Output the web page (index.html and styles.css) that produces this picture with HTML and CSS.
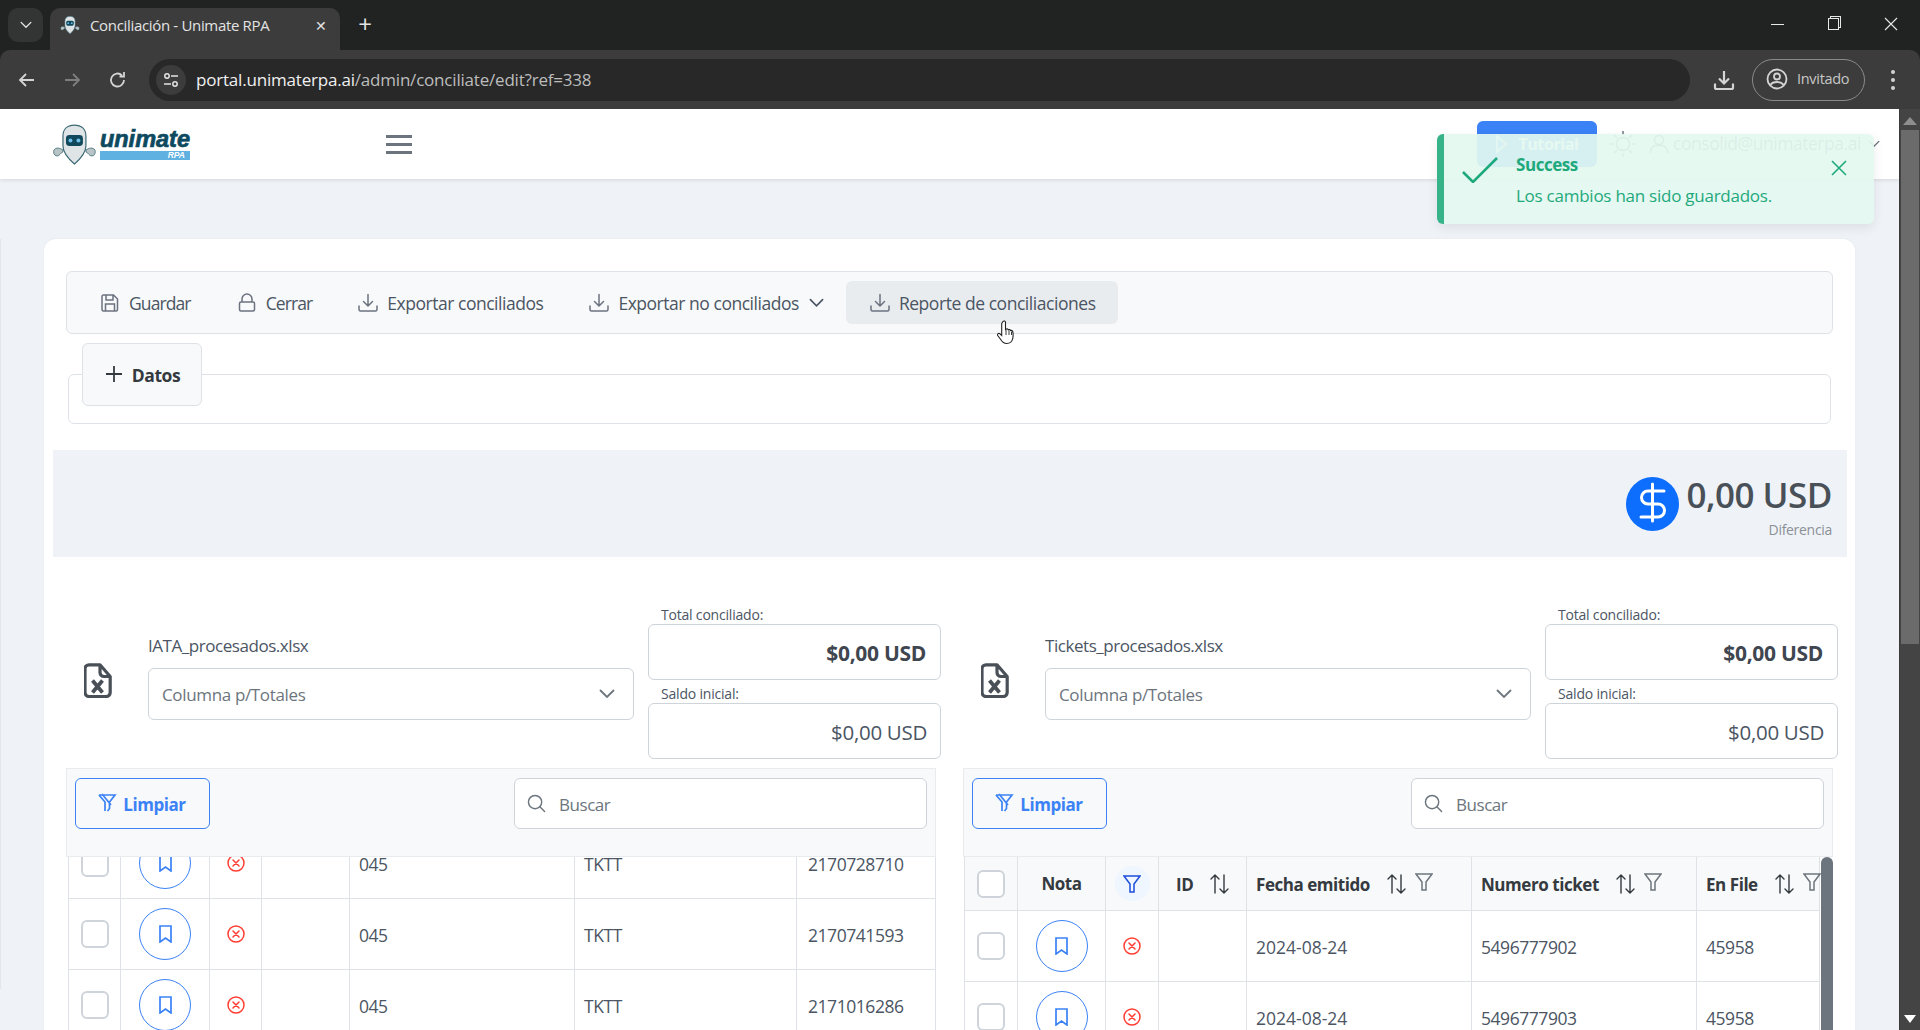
FILE: index.html
```html
<!DOCTYPE html>
<html lang="es">
<head>
    <meta charset="UTF-8">
    <title>Conciliación - Unimate RPA</title>
    <link rel="stylesheet" href="styles.css">
</head>
<body>
    <svg class="icon-defs" width="0" height="0">
        <symbol id="i-save" viewBox="0 0 20 20"><path d="M3.500 2h10l4 4v10.500a1.500 1.500 0 0 1-1.500 1.500h-12.500a1.500 1.500 0 0 1-1.500-1.500v-13a1.500 1.500 0 0 1 1.500-1.500z M6 2v5h7v-5 M5.500 18v-7h9v7" fill="none" stroke="currentColor" stroke-width="1.500"/></symbol>
        <symbol id="i-lock" viewBox="0 0 20 20"><path d="M5 9v-3a5 5 0 0 1 10 0v3 M4 9h12a1.500 1.500 0 0 1 1.500 1.500v6a1.500 1.500 0 0 1-1.500 1.500h-12a1.500 1.500 0 0 1-1.500-1.500v-6a1.500 1.500 0 0 1 1.500-1.500z" fill="none" stroke="currentColor" stroke-width="1.500"/></symbol>
        <symbol id="i-download" viewBox="0 0 20 20"><path d="M10 1.500v11.500 M5.500 8.500l4.500 4.500 4.500-4.500 M1 13v3.500a1.500 1.500 0 0 0 1.500 1.500h15a1.500 1.500 0 0 0 1.500-1.500v-3.500" fill="none" stroke="currentColor" stroke-width="1.500" stroke-linecap="round"/></symbol>
        <symbol id="i-chevron" viewBox="0 0 16 10"><path d="M1.500 1.500l6.500 6.500 6.500-6.500" fill="none" stroke="currentColor" stroke-width="1.800" stroke-linecap="round"/></symbol>
        <symbol id="i-excel" viewBox="0 0 28 35"><path d="M5 1.800h11l10.200 11.700v16a4 4 0 0 1-4 4h-17.200a4 4 0 0 1-4-4v-23.700a4 4 0 0 1 4-4z M16 1.800v7.700a4 4 0 0 0 4 4h6" fill="none" stroke="currentColor" stroke-width="3.200" stroke-linejoin="round"/><path d="M8.500 17.500l10 12 M18.500 17.500l-10 12" fill="none" stroke="currentColor" stroke-width="3.800"/></symbol>
        <symbol id="i-filter-slash" viewBox="0 0 20 20"><path d="M2 2h16l-5.500 7v6.500l-2 2.500M8 18v-9l-6-7M5 1l9 11" fill="none" stroke="currentColor" stroke-width="1.700"/></symbol>
        <symbol id="i-search" viewBox="0 0 20 20"><circle cx="8.500" cy="8.500" r="7" fill="none" stroke="currentColor" stroke-width="1.500"/><path d="M13.500 13.500l5 5" stroke="currentColor" stroke-width="1.500" stroke-linecap="round"/></symbol>
        <symbol id="i-bookmark" viewBox="0 0 13 18"><path d="M1 1h11v16l-5.500-4-5.500 4z" fill="none" stroke="currentColor" stroke-width="1.700"/></symbol>
        <symbol id="i-times" viewBox="0 0 18 18"><circle cx="9" cy="9" r="8" fill="none" stroke="currentColor" stroke-width="1.500"/><path d="M6 6l6 6M12 6l-6 6" stroke="currentColor" stroke-width="1.500" stroke-linecap="round"/></symbol>
        <symbol id="i-sort" viewBox="0 0 19 20"><path d="M5 19v-18 M1 5l4-4 4 4 M14 1v18 M10 15l4 4 4-4" fill="none" stroke="currentColor" stroke-width="1.400" stroke-linecap="round"/></symbol>
        <symbol id="i-filter" viewBox="0 0 18 18"><path d="M1 1h16l-6 8v8h-4v-8z" fill="none" stroke="currentColor" stroke-width="1.500"/></symbol>
        <symbol id="i-robot" viewBox="0 0 45 41"><path d="M22.500 1c-7 0-11.500 4-11.500 11v10c0 8 8 15 11.500 18 3.500-3 11.500-10 11.500-18v-10c0-7-4.500-11-11.500-11z" fill="#dfe5e6" stroke="#3d6a75" stroke-width="1.200"/><rect x="14" y="11" width="17" height="11" rx="3.500" fill="#10485c"/><circle cx="18.500" cy="16.500" r="2" fill="#6cc0ea"/><circle cx="26.500" cy="16.500" r="2" fill="#6cc0ea"/><path d="M11 26c-3-2-7-3-9 0-1 2 0 6 3 6 3 0 3-3 6-4z M34 26c3-2 7-3 9 0 1 2 0 6-3 6-3 0-3-3-6-4z" fill="#b9c4c6" stroke="#3d6a75" stroke-width=".8"/></symbol>
    </svg>

    <!-- browser chrome -->
    <div class="tabstrip">
        <div class="tab-search"><svg width="12" height="8"><use href="#i-chevron"/></svg></div>
        <div class="tab">
            <svg class="tab-favicon" width="20" height="20"><use href="#i-robot"/></svg>
            <span class="tab-title">Conciliación - Unimate RPA</span>
            <span class="tab-close">✕</span>
        </div>
        <div class="tab-new">+</div>
        <div class="win-controls">
            <span class="win-min"></span>
            <span class="win-restore"></span>
            <svg width="16" height="16" viewBox="0 0 16 16"><path d="M2 2l12 12M14 2l-12 12" stroke="#e8e8e8" stroke-width="1.100"/></svg>
        </div>
    </div>
    <div class="browserbar">
        <svg class="nav-icon" width="20" height="20" viewBox="0 0 20 20"><path d="M17 10h-14M9 4l-6 6 6 6" fill="none" stroke="#d4d4d4" stroke-width="1.800"/></svg>
        <svg class="nav-icon" width="20" height="20" viewBox="0 0 20 20"><path d="M3 10h14M11 4l6 6-6 6" fill="none" stroke="#7d7d7d" stroke-width="1.800"/></svg>
        <svg class="nav-icon reload" width="20" height="20" viewBox="0 0 20 20"><path d="M16 10a6.500 6.500 0 1 1-2-4.700M16 2v4.500h-4.500" fill="none" stroke="#d4d4d4" stroke-width="1.800"/></svg>
        <div class="urlbar">
            <span class="url-tune">
                <svg width="16" height="16" viewBox="0 0 16 16"><circle cx="4" cy="4" r="2.200" fill="none" stroke="#e3e3e3" stroke-width="1.500"/><circle cx="12" cy="12" r="2.200" fill="none" stroke="#e3e3e3" stroke-width="1.500"/><path d="M8 4h7M1 12h7" stroke="#e3e3e3" stroke-width="1.500"/></svg>
            </span>
            <span class="url-host">portal.unimaterpa.ai</span><span class="url-path">/admin/conciliate/edit?ref=338</span>
        </div>
        <svg class="bar-download" width="22" height="22" viewBox="0 0 22 22"><path d="M11 2v12M6 9.500l5 5 5-5M2 14.500v4a1.500 1.500 0 0 0 1.500 1.500h15a1.500 1.500 0 0 0 1.500-1.500v-4" fill="none" stroke="#d4d4d4" stroke-width="2.200"/></svg>
        <div class="guest-pill">
            <svg width="22" height="22" viewBox="0 0 22 22"><circle cx="11" cy="11" r="9.500" fill="none" stroke="#d4d4d4" stroke-width="1.800"/><circle cx="11" cy="8.500" r="3" fill="none" stroke="#d4d4d4" stroke-width="1.800"/><path d="M4.500 17c2-4 11-4 13 0" fill="none" stroke="#d4d4d4" stroke-width="1.800"/></svg>
            <span>Invitado</span>
        </div>
        <div class="bar-menu"><i></i><i></i><i></i></div>
    </div>

    <div class="viewport">
        <div class="page">
            <div class="side-edge"></div>
            <header class="topbar">
                <a class="logo">
                    <svg class="logo-robot" width="45" height="41"><use href="#i-robot"/></svg>
                    <span class="logo-text">
                        <span class="logo-name">unimate</span>
                        <span class="logo-rpa">RPA</span>
                    </span>
                </a>
                <div class="hamburger"><i></i><i></i><i></i></div>
                <div class="topbar-right">
                    <button class="tutorial-btn"><svg width="13" height="20" viewBox="0 0 13 20"><path d="M2 2l9 8-9 8z" fill="none" stroke="#fff" stroke-width="1.500"/></svg>Tutorial</button>
                    <svg class="sun" width="28" height="28" viewBox="0 0 28 28"><circle cx="14" cy="14" r="6.500" fill="none" stroke="#6c757d" stroke-width="1.500"/><path d="M14 1v4M14 23v4M1 14h4M23 14h4M5 5l3 3M20 20l3 3M23 5l-3 3M8 20l-3 3" stroke="#6c757d" stroke-width="1.500"/></svg>
                    <svg class="user-icon" width="20" height="20" viewBox="0 0 20 20"><circle cx="10" cy="6" r="4.500" fill="none" stroke="#6c757d" stroke-width="1.500"/><path d="M1.500 19v-1.500a6 6 0 0 1 6-6h5a6 6 0 0 1 6 6v1.500" fill="none" stroke="#6c757d" stroke-width="1.500"/></svg>
                    <span class="user-mail">consolid@unimaterpa.ai</span>
                    <svg class="user-chevron" width="12" height="8"><use href="#i-chevron"/></svg>
                </div>
            </header>

            <div class="toast">
                <svg class="toast-check" width="36" height="26" viewBox="0 0 36 26"><path d="M1 15l10 10 24-24" fill="none" stroke="#1ea97c" stroke-width="2.600"/></svg>
                <div class="toast-body">
                    <div class="toast-title">Success</div>
                    <div class="toast-text">Los cambios han sido guardados.</div>
                </div>
                <svg class="toast-close" width="16" height="16" viewBox="0 0 16 16"><path d="M1 1l14 14M15 1l-14 14" stroke="#1ea97c" stroke-width="1.600"/></svg>
            </div>

            <main class="card">
                <div class="toolbar">
                    <button class="tool-btn tight"><svg width="20" height="20"><use href="#i-save"/></svg>Guardar</button>
                    <button class="tool-btn tight"><svg width="20" height="20"><use href="#i-lock"/></svg>Cerrar</button>
                    <button class="tool-btn"><svg width="20" height="20"><use href="#i-download"/></svg>Exportar conciliados</button>
                    <button class="tool-btn"><svg width="20" height="20"><use href="#i-download"/></svg>Exportar no conciliados<svg class="tool-caret" width="15" height="10"><use href="#i-chevron"/></svg></button>
                    <button class="tool-btn hover"><svg width="20" height="20"><use href="#i-download"/></svg>Reporte de conciliaciones</button>
                </div>

                <fieldset class="datos">
                    <legend><svg class="plus" width="16" height="16" viewBox="0 0 16 16"><path d="M8 0v16M0 8h16" stroke="#343a40" stroke-width="1.800"/></svg>Datos</legend>
                </fieldset>

                <div class="diff-bar">
                    <span class="diff-icon"><svg width="53" height="54" viewBox="0 0 53 54"><path d="M38 14H22a6.500 6.500 0 0 0 0 13H32a6.500 6.500 0 0 1 0 13H15M26.500 7V44" fill="none" stroke="#fff" stroke-width="3" stroke-linecap="round"/></svg></span>
                    <div class="diff-text">
                        <div class="diff-amount">0,00 USD</div>
                        <div class="diff-label">Diferencia</div>
                    </div>
                </div>

                <div class="panels">
                    <section class="panel">
                        <div class="panel-head">
                            <svg class="file-icon" width="28" height="35"><use href="#i-excel"/></svg>
                            <div class="file-col">
                                <div class="file-name">IATA_procesados.xlsx</div>
                                <div class="select">Columna p/Totales<svg width="16" height="10"><use href="#i-chevron"/></svg></div>
                            </div>
                            <div class="totals">
                                <label>Total conciliado:</label>
                                <div class="total-box strong">$0,00 USD</div>
                                <label>Saldo inicial:</label>
                                <div class="total-box tall">$0,00 USD</div>
                            </div>
                        </div>
                        <div class="table-area">
                            <div class="table-tools">
                                <button class="clear-btn"><svg width="20" height="20"><use href="#i-filter-slash"/></svg>Limpiar</button>
                                <div class="search"><svg width="19" height="19"><use href="#i-search"/></svg><span>Buscar</span></div>
                            </div>
                            <div class="table-wrap left">
                                <table class="grid-left">
                                    <colgroup><col class="c53"><col class="c89"><col class="c52"><col class="c88"><col class="c225"><col class="c222"><col class="c139"></colgroup>
                                    <tbody>
                                        <tr>
                                            <td class="center"><span class="check"></span></td>
                                            <td class="center"><span class="note-btn"><svg width="13" height="18"><use href="#i-bookmark"/></svg></span></td>
                                            <td class="center"><svg class="no-icon" width="18" height="18"><use href="#i-times"/></svg></td>
                                            <td></td><td>045</td><td>TKTT</td><td class="last">2170728710</td>
                                        </tr>
                                        <tr>
                                            <td class="center"><span class="check"></span></td>
                                            <td class="center"><span class="note-btn"><svg width="13" height="18"><use href="#i-bookmark"/></svg></span></td>
                                            <td class="center"><svg class="no-icon" width="18" height="18"><use href="#i-times"/></svg></td>
                                            <td></td><td>045</td><td>TKTT</td><td class="last">2170741593</td>
                                        </tr>
                                        <tr>
                                            <td class="center"><span class="check"></span></td>
                                            <td class="center"><span class="note-btn"><svg width="13" height="18"><use href="#i-bookmark"/></svg></span></td>
                                            <td class="center"><svg class="no-icon" width="18" height="18"><use href="#i-times"/></svg></td>
                                            <td></td><td>045</td><td>TKTT</td><td class="last">2171016286</td>
                                        </tr>
                                    </tbody>
                                </table>
                            </div>
                        </div>
                    </section>

                    <section class="panel">
                        <div class="panel-head">
                            <svg class="file-icon" width="28" height="35"><use href="#i-excel"/></svg>
                            <div class="file-col">
                                <div class="file-name">Tickets_procesados.xlsx</div>
                                <div class="select">Columna p/Totales<svg width="16" height="10"><use href="#i-chevron"/></svg></div>
                            </div>
                            <div class="totals">
                                <label>Total conciliado:</label>
                                <div class="total-box strong">$0,00 USD</div>
                                <label>Saldo inicial:</label>
                                <div class="total-box tall">$0,00 USD</div>
                            </div>
                        </div>
                        <div class="table-area">
                            <div class="table-tools">
                                <button class="clear-btn"><svg width="20" height="20"><use href="#i-filter-slash"/></svg>Limpiar</button>
                                <div class="search"><svg width="19" height="19"><use href="#i-search"/></svg><span>Buscar</span></div>
                            </div>
                            <div class="table-wrap right">
                                <div class="table-scroll"></div>
                                <table class="grid-right">
                                    <colgroup><col class="c54"><col class="c88"><col class="c53"><col class="c88"><col class="c225"><col class="c225"><col class="c123"></colgroup>
                                    <thead>
                                        <tr>
                                            <th class="center"><span class="check"></span></th>
                                            <th class="center">Nota</th>
                                            <th class="center"><span class="filter-on"><svg width="18" height="18"><use href="#i-filter"/></svg></span></th>
                                            <th class="th-id"><span class="th-in">ID<svg class="sort" width="19" height="20"><use href="#i-sort"/></svg></span></th>
                                            <th><span class="th-in">Fecha emitido<svg class="sort" width="19" height="20"><use href="#i-sort"/></svg><svg class="filter" width="18" height="18"><use href="#i-filter"/></svg></span></th>
                                            <th><span class="th-in">Numero ticket<svg class="sort" width="19" height="20"><use href="#i-sort"/></svg><svg class="filter" width="18" height="18"><use href="#i-filter"/></svg></span></th>
                                            <th><span class="th-in">En File<svg class="sort" width="19" height="20"><use href="#i-sort"/></svg><svg class="filter" width="18" height="18"><use href="#i-filter"/></svg></span></th>
                                        </tr>
                                    </thead>
                                    <tbody>
                                        <tr>
                                            <td class="center"><span class="check"></span></td>
                                            <td class="center"><span class="note-btn"><svg width="13" height="18"><use href="#i-bookmark"/></svg></span></td>
                                            <td class="center"><svg class="no-icon" width="18" height="18"><use href="#i-times"/></svg></td>
                                            <td></td><td class="date">2024-08-24</td><td>5496777902</td><td>45958</td>
                                        </tr>
                                        <tr>
                                            <td class="center"><span class="check"></span></td>
                                            <td class="center"><span class="note-btn"><svg width="13" height="18"><use href="#i-bookmark"/></svg></span></td>
                                            <td class="center"><svg class="no-icon" width="18" height="18"><use href="#i-times"/></svg></td>
                                            <td></td><td class="date">2024-08-24</td><td>5496777903</td><td>45958</td>
                                        </tr>
                                    </tbody>
                                </table>
                            </div>
                        </div>
                    </section>
                </div>
            </main>

            <!-- mouse pointer -->
            <svg class="cursor" width="20" height="25" viewBox="0 0 20 25"><path d="M6 1.500c1-1 2.500-.5 2.500 1v7l1-.5c.8-.3 1.600 0 1.800.8.800-.5 2-.2 2.200.7.800-.4 2 0 2.200 1 .5 2 .5 5 0 7-.5 2.500-2 5-6 5-3 0-4.500-1.500-6-4l-3-4c-.8-1.200.8-2.800 2-1.800l2 1.800v-12z" fill="#fff" stroke="#222" stroke-width="1.100"/><path d="M9 10v5M12 10.500v4.500M14.500 11.500v3.500" stroke="#222" stroke-width=".9"/></svg>
        </div>

        <div class="vscroll">
            <div class="vscroll-up"></div>
            <div class="vscroll-thumb"></div>
            <div class="vscroll-down"></div>
        </div>
    </div>
</body>
</html>
```

FILE: styles.css
```css
* {
    box-sizing: border-box;
}

html, body {
    margin: 0;
    height: 1030px;
    overflow: hidden;
}

body {
    display: flex;
    flex-direction: column;
    font-family: "Open Sans", "Noto Sans", sans-serif;
    background-color: #212322;
}

button {
    font-family: inherit;
    cursor: pointer;
}

.icon-defs {
    position: absolute;
}

/* browser chrome */
.tabstrip {
    height: 50px;
    display: flex;
    align-items: flex-end;
    background-color: #212322;
    padding-left: 8px;
    flex-shrink: 0;
}

.tab-search {
    width: 35px;
    height: 34px;
    margin-bottom: 8px;
    border-radius: 10px;
    background-color: #333534;
    color: #e3e3e3;
    display: flex;
    align-items: center;
    justify-content: center;
}

.tab {
    width: 290px;
    height: 42px;
    margin-left: 7px;
    border-radius: 10px 10px 0 0;
    background-color: #3c3c3c;
    display: flex;
    align-items: center;
    padding: 0 0 8px 10px;
    color: #e3e3e3;
}

.tab-favicon {
    flex-shrink: 0;
}

.tab-title {
    margin-left: 10px;
    font-size: 15px;
    letter-spacing: -0.33px;
    white-space: nowrap;
}

.tab-close {
    margin-left: auto;
    margin-right: 13px;
    font-size: 14px;
}

.tab-new {
    margin: 0 0 8px 14px;
    width: 22px;
    height: 34px;
    color: #e3e3e3;
    font-size: 24px;
    line-height: 32px;
    text-align: center;
}

.win-controls {
    margin-left: auto;
    align-self: flex-start;
    display: flex;
    align-items: center;
    height: 48px;
    gap: 44px;
    padding-right: 21px;
}

.win-min {
    width: 13px;
    height: 1px;
    background-color: #e8e8e8;
}

.win-restore {
    width: 11px;
    height: 12px;
    border: 1px solid #e8e8e8;
    box-shadow: 2px -2px 0 -1px #212322, 2px -2px 0 0 #e8e8e8;
}

.browserbar {
    height: 59px;
    display: flex;
    align-items: center;
    background-color: #3c3c3c;
    border-radius: 10px 10px 0 0;
    flex-shrink: 0;
    color: #d4d4d4;
}

.nav-icon {
    margin-left: 25px;
    flex-shrink: 0;
}

.nav-icon:first-child {
    margin-left: 17px;
}

.nav-icon.reload {
    margin-left: 26px;
}

.urlbar {
    width: 1541px;
    height: 42px;
    margin-left: 21px;
    border-radius: 21px;
    background-color: #282828;
    display: flex;
    align-items: center;
    padding-left: 7px;
    font-size: 17px;
    letter-spacing: -0.2px;
    white-space: nowrap;
}

.url-tune {
    width: 30px;
    height: 30px;
    margin-right: 10px;
    border-radius: 50%;
    background-color: #3c3c3c;
    display: flex;
    align-items: center;
    justify-content: center;
}

.url-host {
    color: #f0f0f0;
}

.url-path {
    color: #bdbdbd;
}

.bar-download {
    margin-left: 23px;
}

.guest-pill {
    width: 113px;
    height: 42px;
    margin-left: 17px;
    border: 1px solid #8a8a8a;
    border-radius: 21px;
    display: flex;
    align-items: center;
    gap: 9px;
    padding: 0 0 2px 13px;
    font-size: 14.5px;
    letter-spacing: -0.3px;
    color: #c7c7c7;
}

.bar-menu {
    margin-left: 26px;
    display: flex;
    flex-direction: column;
    gap: 4px;
}

.bar-menu i {
    width: 4px;
    height: 4px;
    border-radius: 50%;
    background-color: #d4d4d4;
}

/* page */
.viewport {
    flex: 1;
    display: flex;
    min-height: 0;
}

.page {
    position: relative;
    width: 1899px;
    overflow: hidden;
    background-color: #eff3f8;
    color: #4b5563;
    font-size: 17px;
    letter-spacing: -0.45px;
}

.side-edge {
    position: absolute;
    left: 0;
    top: 130px;
    width: 1px;
    height: 750px;
    background-color: #e3e7ed;
}

.topbar {
    height: 70px;
    display: flex;
    align-items: center;
    background-color: #fff;
    box-shadow: 0 1px 4px rgba(0, 0, 0, 0.12);
    padding: 0 19px 0 52px;
}

.logo {
    width: 138px;
    display: flex;
    align-items: center;
}

.logo-text {
    display: flex;
    flex-direction: column;
    margin-left: 3px;
    margin-top: 1px;
}

.logo-name {
    font-family: "Liberation Sans", sans-serif;
    font-weight: 700;
    font-style: italic;
    font-size: 23.5px;
    letter-spacing: 0;
    line-height: 19px;
    color: #0e4a5f;
    -webkit-text-stroke: 0.7px #0e4a5f;
}

.logo-rpa {
    height: 9px;
    margin-top: 2px;
    background-color: #5eb1e0;
    color: #fff;
    font-family: "Liberation Sans", sans-serif;
    font-weight: 700;
    font-style: italic;
    font-size: 8.5px;
    line-height: 9px;
    letter-spacing: 0;
    text-align: right;
    padding-right: 5px;
}

.hamburger {
    width: 26px;
    margin-left: 196px;
    display: flex;
    flex-direction: column;
    gap: 5px;
}

.hamburger i {
    height: 3px;
    background-color: #6c757d;
}

.topbar-right {
    margin-left: auto;
    display: flex;
    align-items: center;
}

.tutorial-btn {
    width: 120px;
    height: 46px;
    border: 0;
    border-radius: 6px;
    background-color: #3b82f6;
    color: #fff;
    font-size: 16px;
    font-weight: 700;
    letter-spacing: -0.4px;
    display: flex;
    align-items: center;
    justify-content: center;
    gap: 10px;
}

.sun {
    margin-left: 12px;
}

.user-icon {
    margin-left: 12px;
}

.user-mail {
    margin-left: 4px;
    margin-top: -2px;
    font-size: 17.5px;
    color: #6c757d;
}

.user-chevron {
    margin-left: 7px;
    color: #6c757d;
}

.toast {
    position: absolute;
    top: 25px;
    right: 25px;
    width: 437px;
    height: 90px;
    display: flex;
    background-color: rgba(228, 248, 240, 0.92);
    border-left: 7px solid #36b388;
    border-radius: 6px;
    box-shadow: 0 4px 12px rgba(0, 0, 0, 0.08);
    color: #1ea97c;
    z-index: 5;
}

.toast-check {
    margin: 23px 0 0 18px;
    flex-shrink: 0;
}

.toast-body {
    margin-left: 18px;
    padding-top: 20px;
}

.toast-title {
    font-weight: 700;
    font-size: 17px;
    line-height: 22px;
}

.toast-text {
    margin-top: 8px;
    font-size: 17px;
    line-height: 24px;
    letter-spacing: -0.25px;
}

.toast-close {
    position: absolute;
    left: 387px;
    top: 26px;
}

.cursor {
    position: absolute;
    left: 997px;
    top: 211px;
    z-index: 6;
}

.card {
    height: 900px;
    margin: 60px 44px 0;
    padding: 32px 22px 0;
    border-radius: 12px 12px 0 0;
    background-color: #fff;
    box-shadow: 0 0 3px rgba(0, 0, 0, 0.05);
}

.toolbar {
    height: 63px;
    display: flex;
    align-items: center;
    padding: 0 9px;
    background-color: #f8f9fa;
    border: 1px solid #dee2e6;
    border-radius: 6px;
}

.tool-btn {
    height: 43px;
    display: flex;
    align-items: center;
    padding: 1px 22px 0 24px;
    border: 0;
    border-radius: 6px;
    background: transparent;
    color: #4b5563;
    font-size: 17.5px;
    letter-spacing: -0.47px;
    white-space: nowrap;
}

.tool-btn.tight {
    letter-spacing: -0.9px;
}

.tool-btn svg {
    margin: -1px 9px 0 0;
    color: #6b7280;
    flex-shrink: 0;
}

.tool-btn .tool-caret {
    margin: -1px 0 0 10px;
    color: #4b5563;
}

.tool-btn.hover {
    background-color: #e9ecef;
    letter-spacing: -0.45px;
}

.datos {
    margin: 9px 2px 0;
    padding: 0 0 17px 13px;
    border: 1px solid #dee2e6;
    border-radius: 6px;
    min-inline-size: 0;
}

.datos legend {
    width: 120px;
    height: 63px;
    padding: 1px 0 0 2px;
    display: flex;
    align-items: center;
    justify-content: center;
    background-color: #f8f9fa;
    border: 1px solid #dee2e6;
    border-radius: 6px;
    font-size: 17.5px;
    font-weight: 700;
    color: #343a40;
}

.plus {
    margin: -2px 10px 0 0;
}

.diff-bar {
    height: 107px;
    margin: 26px -14px 0 -13px;
    padding: 27px 15px 0 0;
    background-color: #eff3f8;
    display: flex;
    justify-content: flex-end;
    gap: 7px;
}

.diff-icon {
    width: 53px;
    height: 54px;
    border-radius: 50%;
    background-color: #0d6efd;
}

.diff-amount {
    margin-top: -7px;
    font-size: 35px;
    font-weight: 600;
    line-height: 50px;
    letter-spacing: -0.5px;
    color: #495057;
}

.diff-label {
    font-size: 14px;
    line-height: 20px;
    letter-spacing: -0.3px;
    text-align: right;
    color: #8b9096;
}

.panels {
    display: grid;
    grid-template-columns: 875px 875px;
    column-gap: 22px;
    margin: 49px -5px 0 0;
}

.panel-head {
    display: grid;
    grid-template-columns: 82px 500px 293px;
    height: 153px;
}

.file-icon {
    margin: 57px 0 0 18px;
    color: #495057;
}

.file-col {
    padding: 29px 14px 0 0;
}

.file-name {
    line-height: 22px;
    color: #4b5563;
}

.select {
    height: 52px;
    margin-top: 11px;
    display: flex;
    align-items: center;
    justify-content: space-between;
    padding: 0 18px 0 13px;
    background-color: #fff;
    border: 1px solid #ced4da;
    border-radius: 6px;
    color: #6c757d;
    letter-spacing: -0.35px;
}

.totals label {
    display: block;
    padding-left: 13px;
    height: 18px;
    font-size: 14px;
    line-height: 18px;
    letter-spacing: -0.2px;
}

.total-box {
    height: 56px;
    margin-bottom: 5px;
    display: flex;
    align-items: center;
    justify-content: flex-end;
    padding: 2px 14px 0 0;
    border: 1px solid #ced4da;
    border-radius: 6px;
    font-size: 20.5px;
    letter-spacing: -0.3px;
}

.total-box.tall {
    margin-bottom: 0;
    padding-right: 13px;
}

.total-box.strong {
    font-size: 21px;
    font-weight: 700;
    color: #3f4650;
}

.table-area {
    width: 870px;
    margin-top: 9px;
}

.table-tools {
    height: 89px;
    display: flex;
    justify-content: space-between;
    padding: 9px 8px 0 8px;
    background-color: #f8f9fa;
    border: 1px solid #e9ecef;
}

.clear-btn {
    width: 135px;
    height: 51px;
    display: flex;
    align-items: center;
    justify-content: center;
    gap: 6px;
    padding: 2px 0 0;
    background: transparent;
    border: 1px solid #3b82f6;
    border-radius: 6px;
    color: #3b82f6;
    font-size: 17px;
    font-weight: 700;
    letter-spacing: -0.45px;
}

.clear-btn svg {
    margin: -4px 0 0 -2px;
}

.search {
    width: 413px;
    height: 51px;
    display: flex;
    align-items: center;
    gap: 13px;
    padding-left: 12px;
    background-color: #fff;
    border: 1px solid #ced4da;
    border-radius: 6px;
    color: #6c757d;
}

.search span {
    padding-top: 2px;
}

.table-wrap {
    position: relative;
    height: 220px;
    overflow: hidden;
}

.table-wrap.left {
    padding-left: 2px;
}

.table-wrap.left table {
    margin-top: -29px;
}

.table-wrap.right {
    padding-left: 1px;
}

.table-scroll {
    position: absolute;
    top: 0;
    right: 0;
    width: 12px;
    height: 220px;
    border-radius: 6px 6px 0 0;
    background-color: #6c757d;
    z-index: 2;
}

table {
    table-layout: fixed;
    border-collapse: separate;
    border-spacing: 0;
    background-color: #fff;
}

.grid-left {
    width: 868px;
}

.grid-right {
    width: 856px;
}

.c52 { width: 52px; }
.c53 { width: 53px; }
.c54 { width: 54px; }
.c88 { width: 88px; }
.c89 { width: 89px; }
.c123 { width: 123px; }
.c139 { width: 139px; }
.c222 { width: 222px; }
.c225 { width: 225px; }

td, th {
    border-right: 1px solid #dee2e6;
    border-bottom: 1px solid #dee2e6;
    text-align: left;
    white-space: nowrap;
}

td {
    height: 71px;
    padding: 2px 0 0 9px;
    font-size: 17.5px;
    line-height: 14px;
}

th {
    height: 54px;
    padding: 1px 0 0 9px;
    background-color: #f8f9fa;
    color: #343a40;
    font-weight: 700;
}

td:first-child, th:first-child {
    border-left: 1px solid #dee2e6;
}

td.center, th.center {
    padding: 0;
    text-align: center;
}

td.last {
    padding-left: 11px;
}

td.date {
    letter-spacing: 0;
}

th.center {
    font-size: 17px;
}

.th-id {
    padding-left: 17px;
}

.th-in {
    display: flex;
    align-items: center;
}

.sort {
    margin-left: 17px;
    flex-shrink: 0;
    color: #343a40;
}

.filter {
    margin: -4px 0 0 9px;
    flex-shrink: 0;
    color: #6c757d;
}

.filter-on {
    width: 35px;
    height: 35px;
    border-radius: 50%;
    background-color: #eff6ff;
    color: #1d4ed8;
    display: inline-flex;
    align-items: center;
    justify-content: center;
    vertical-align: middle;
}

.check {
    display: inline-block;
    width: 28px;
    height: 28px;
    border: 2px solid #ced4da;
    border-radius: 6px;
    background-color: #fff;
    vertical-align: middle;
}

.note-btn {
    width: 52px;
    height: 52px;
    border: 1px solid #3b82f6;
    border-radius: 50%;
    color: #3b82f6;
    display: inline-flex;
    align-items: center;
    justify-content: center;
    vertical-align: middle;
}

.no-icon {
    color: #ff3d32;
    vertical-align: middle;
}

/* window scrollbar */
.vscroll {
    flex: 1;
    display: flex;
    flex-direction: column;
    align-items: center;
    background-color: #444;
    border-left: 1px solid #3a3a3a;
}

.vscroll-up {
    width: 0;
    height: 0;
    margin: 8px 0 5px;
    border-left: 7px solid transparent;
    border-right: 7px solid transparent;
    border-bottom: 8px solid #8e8e8e;
}

.vscroll-thumb {
    width: 18px;
    height: 514px;
    background-color: #6b6b6b;
}

.vscroll-down {
    width: 0;
    height: 0;
    margin-top: auto;
    margin-bottom: 7px;
    border-left: 6px solid transparent;
    border-right: 6px solid transparent;
    border-top: 8px solid #fff;
}
```
